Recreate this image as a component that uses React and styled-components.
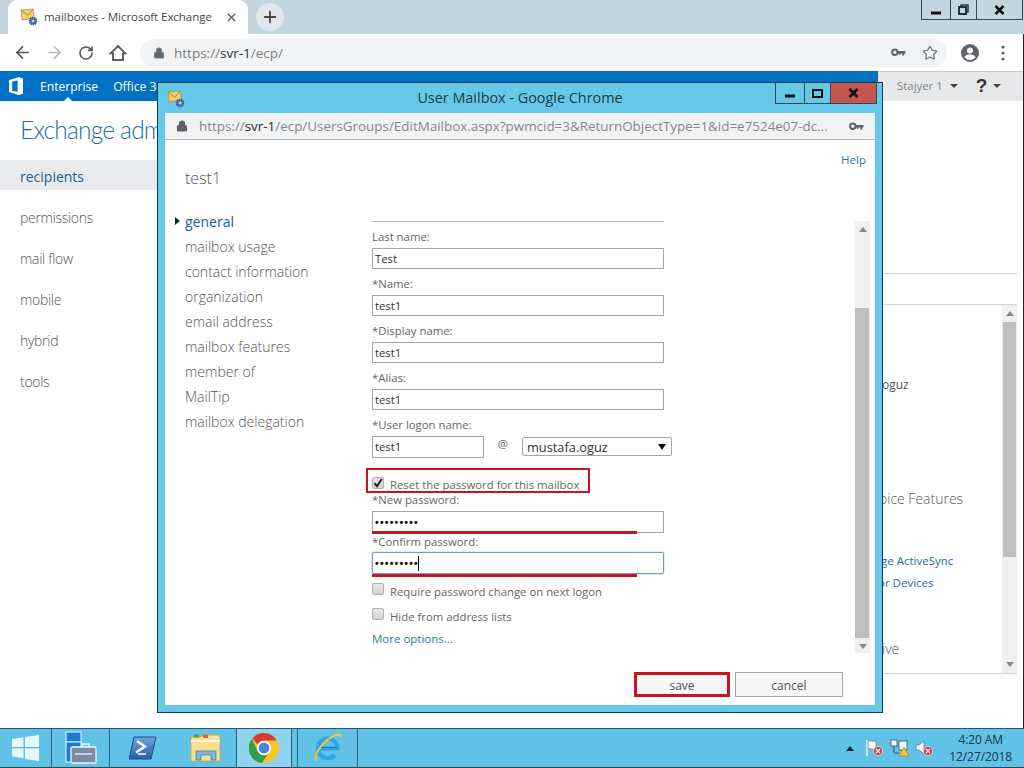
import React from 'react';
import styled, { createGlobalStyle } from 'styled-components';
import { ArrowLeft, ArrowRight, RotateCw, Lock, Star, X, Plus } from 'lucide-react';

const UI = `"Open Sans", "Noto Sans", "Liberation Sans", sans-serif`;
const RED = '#c8141c';

const Global = createGlobalStyle`
  html, body { margin: 0; padding: 0; background: #fff; }
  * { box-sizing: border-box; }
  #root { width: 1024px; height: 768px; }
`;

const Desktop = styled.div`
  position: relative; width: 1024px; height: 768px; overflow: hidden;
  display: flex; flex-direction: column; background: #fff;
  font-family: ${UI}; color: #666;
`;
const TabStrip = styled.div`
  height: 34px; flex: none; background: #c3d5de; display: flex; align-items: flex-end; padding-left: 8px; position: relative;
`;
const Tab = styled.div`
  width: 240px; height: 34px; background: #fff; border-radius: 9px 9px 0 0;
  display: flex; align-items: center; padding: 0 10px 0 12px; font-size: 11.5px; color: #45484b; gap: 6px;
`;
const TabTitle = styled.span` flex: 1; white-space: nowrap; letter-spacing: -.05px; padding-bottom: 1px; `;
const NewTab = styled.div`
  width: 28px; height: 28px; border-radius: 50%; background: #e0e7ec; color: #45484b;
  display: flex; align-items: center; justify-content: center; margin: 0 0 3px 8px;
`;
const WinControls = styled.div`
  position: absolute; display: flex; height: ${p => p.$h}px; top: 0; right: ${p => p.$right}px;
  border: 1px solid #2e4a5c; border-top: none;
`;
const WinBtn = styled.div`
  width: ${p => p.$w}px; display: flex; align-items: center; justify-content: center;
  border-left: ${p => p.$first ? 'none' : '1px solid #2e4a5c'};
  background: ${p => p.$bg || 'transparent'};
`;
const Toolbar = styled.div`
  height: 37px; flex: none; background: #fff; display: flex; align-items: center; padding-left: 6px; color: #5f6368;
  border-right: 1px solid #222;
`;
const ToolIcons = styled.div` display: flex; align-items: center; width: 134px; `;
const ToolCell = styled.span` width: 32px; display: flex; justify-content: center; `;
const Omnibox = styled.div`
  width: 807px; height: 28px; border-radius: 14px; background: #f1f3f4; display: flex; align-items: center;
  padding: 0 8px 0 13px; font-size: 13.5px; color: #7b7e82; gap: 9px;
`;
const Url = styled.span` flex: 1; white-space: nowrap; `;
const Host = styled.span` color: #2b2d30; `;
const OmniKey = styled.span` display: flex; margin-right: 7px; `;
const OmniStar = styled(Star)` margin-right: 1px; `;
const AfterOmni = styled.div` display: flex; align-items: center; gap: 21px; margin-left: 13px; `;
const TopBar = styled.div`
  height: 30px; flex: none; display: flex; background: #e7e8ea; position: relative; border-right: 1px solid #222;
`;
const BlueBar = styled.div`
  width: 878px; background: #0072c6; color: #fff; display: flex; align-items: center; font-size: 12.1px; padding-left: 8px; position: relative;
`;
const BarTick = styled.i`
  position: absolute; left: 64px; bottom: 0; border: 4px solid transparent; border-bottom-color: #fff; border-top: none;
`;
const BarLink = styled.span` margin-left: ${p => p.$ml}px; white-space: nowrap; `;
const UserArea = styled.div`
  flex: 1; display: flex; align-items: center; padding: 0 0 2px 19px; font-size: 11.4px; color: #858585; white-space: nowrap;
  border-top: 1px solid #c9c9c9;
`;
const Caret = styled.i`
  display: inline-block; border: 4px solid transparent; border-top-color: #444; border-bottom: none; margin-left: ${p => p.$ml || 8}px;
`;
const Help = styled.b` font-size: 19px; color: #333; margin-left: 18px; font-family: "Liberation Sans", sans-serif; `;
const Main = styled.div` flex: 1; display: flex; min-height: 0; border-right: 1px solid #222; `;
const Sidebar = styled.div` width: 160px; flex: none; padding-top: 13px; `;
const AppTitle = styled.div`
  font-family: Lato, "Open Sans", sans-serif; letter-spacing: -.8px;
  font-size: 24.5px; font-weight: 300; color: #1e6ca8; padding-left: 20px; white-space: nowrap; height: 46px; line-height: 32px;
`;
const SideItem = styled.div`
  height: 30px; line-height: 33px; margin-bottom: 11px; padding-left: 20px; font-size: 14px; font-weight: ${p => p.$active ? 400 : 300};
  letter-spacing: ${p => p.$active ? 0 : '-.3px'};
  background: ${p => p.$active ? '#e8eaed' : 'transparent'}; color: ${p => p.$active ? '#1b5f94' : '#555'};
`;
const Backdrop = styled.div` flex: 1; padding-left: 722px; `;
const BackRight = styled.div` height: 100%; display: flex; flex-direction: column; `;
const Rule = styled.div`
  height: 1px; background: #d4d4d4; flex: none; margin-top: ${p => p.$mt}px; margin-right: 6px;
`;
const ListArea = styled.div` height: 369px; display: flex; border-bottom: 1px solid #d4d4d4; margin-right: 6px; `;
const ListBody = styled.div` flex: 1; position: relative; `;
const ListText = styled.div`
  position: absolute; left: ${p => p.$left}px; top: ${p => p.$top}px; font-size: ${p => p.$size || (p.$blue ? 11.5 : 12)}px; font-weight: ${p => p.$size ? 300 : 400};
  color: ${p => p.$blue ? '#1f6ea8' : '#555'}; white-space: nowrap;
`;
const Track = styled.div` width: 15px; flex: none; background: #f0f0f0; display: flex; flex-direction: column; align-items: stretch; `;
const TrackThumb = styled.div` height: 235px; flex: none; background: #bfbfbf; margin: 0 1px; `;
const Spacer = styled.div` flex: 1; `;
const ArrowCap = styled.div`
  height: 17px; flex: none; display: flex; align-items: center; justify-content: center;
`;
const ArrowTri = styled.i`
  display: block; border: 4px solid transparent; border-bottom: ${p => p.$up ? '5px solid #888' : 'none'}; border-top: ${p => p.$up ? 'none' : '5px solid #888'};
`;
const Taskbar = styled.div`
  height: 40px; flex: none; background: #5fc2e6; border-top: 1px solid #2f5468; border-bottom: 1px solid #24475a; display: flex; align-items: stretch;
`;
const TaskCell = styled.div`
  width: ${p => p.$w}px; flex: none; display: flex; align-items: center; justify-content: center;
  border-right: ${p => p.$noline ? 'none' : '1px solid #2f5f78'};
  background: ${p => p.$active ? '#8fd4ee' : 'transparent'};
`;
const Tray = styled.div` flex: 1; display: flex; align-items: center; justify-content: flex-end; padding-right: 12px; gap: 5px; `;
const TrayArrow = styled.i`
  display: block; border: 4px solid transparent; border-bottom: 5px solid #11283a; border-top: none; margin-right: 6px;
`;
const Clock = styled.div` font-size: 12px; line-height: 17px; text-align: center; margin-left: 9px; color: #1c3444; letter-spacing: -.1px; `;

/* popup window, placed freely on the desktop */
const Popup = styled.div`
  position: absolute; left: 157px; top: 82px; width: 726px; height: 631px;
  background: #65c8e8; border: 1px solid #1a3a50; padding: 0 7px 7px;
  display: flex; flex-direction: column;
`;
const PopupTitle = styled.div`
  height: 30px; flex: none; display: flex; align-items: center; justify-content: center; font-size: 14.4px; color: #1d3a4b; padding-bottom: 2px;
`;
const PopupFav = styled.span` position: absolute; left: 9px; top: 7px; display: flex; `;
const PopupAddr = styled.div`
  height: 27px; flex: none; background: #f1f2f3; border-bottom: 1px solid #b5b5b5; display: flex; align-items: center;
  padding: 0 11px 0 11px; gap: 11px; font-size: 13.42px; color: #85888b; white-space: nowrap;
`;
const PopupBody = styled.div`
  flex: 1; background: #fff; display: flex; flex-direction: column; min-height: 0;
`;
const HelpLink = styled.div`
  text-align: right; font-size: 11.5px; color: #2a7ba0; padding: 12px 9px 0 0; height: 28px;
`;
const TestTitle = styled.div` font-size: 16px; font-weight: 300; color: #555; padding-left: 20px; height: 41px; line-height: 20px; flex: none; `;
const Columns = styled.div` flex: 1; display: flex; min-height: 0; `;
const PopNav = styled.div` width: 207px; flex: none; padding-left: 20px; `;
const PopNavItem = styled.div`
  height: 25px; line-height: 25px; font-size: 14px; position: relative;
  font-weight: ${p => p.$active ? 400 : 300};
  color: ${p => p.$active ? '#14628f' : '#555'}; white-space: nowrap;
`;
const NavArrow = styled.i`
  position: absolute; left: -10px; top: 8px; border: 4px solid transparent; border-left: 5px solid #222; border-right: none;
`;
const FormCol = styled.div` width: 292px; flex: none; font-size: 11.35px; color: #666; border-top: 1px solid #bdbdbd; padding-top: 7px; margin-top: 12px; height: 432px; `;
const Label = styled.div`
  height: 16px; line-height: 16px; white-space: nowrap; margin-top: ${p => p.$mt || 0}px; margin-bottom: ${p => p.$mb ?? 3}px;
`;
const Field = styled.div`
  height: ${p => p.$h || 21}px; border: 1px solid ${p => p.$focus ? '#6e9dc4' : '#a6a6a6'}; background: #fff; font-size: 11.3px; color: #333;
  border-radius: ${p => p.$focus ? '2px' : 0};
  padding: 0 0 0 2px; line-height: 19px; margin-bottom: ${p => p.$mb ?? 7}px; width: ${p => p.$w || 292}px; flex: none; position: relative;
  box-shadow: ${p => p.$focus ? '0 0 2px #8fb8d8' : 'none'}; white-space: nowrap;
`;
const Dots = styled.span` font-size: 10.5px; letter-spacing: 1.2px; color: #111; font-family: "Liberation Sans", sans-serif; font-weight: 700; `;
const Cursor = styled.i` display: inline-block; width: 1px; height: 15px; background: #000; vertical-align: middle; margin-left: -1px; `;
const RedLine = styled.i` position: absolute; left: -1px; width: 265px; height: 3px; bottom: ${p => p.$b}px; background: ${RED}; `;
const LogonRow = styled.div` display: flex; align-items: flex-start; margin-bottom: 10px; height: 22px; `;
const At = styled.span` width: 38px; flex: none; text-align: center; font-size: 11.5px; `;
const Select = styled.div`
  width: 150px; flex: none; height: 19px; margin-top: 1px; border: 1px solid #a6a6a6; border-radius: 2px; font-size: 12.8px; color: #333;
  display: flex; align-items: center; justify-content: space-between; padding: 0 5px 0 4px;
`;
const SelTri = styled.i` border: 4px solid transparent; border-top: 6px solid #111; border-bottom: none; `;
const CheckRow = styled.div`
  position: relative; display: flex; align-items: center; height: ${p => p.$h}px; margin-top: ${p => p.$mt || 0}px; margin-bottom: ${p => p.$mb || 0}px; white-space: nowrap;
`;
const Box = styled.span`
  width: 12px; height: 12px; border: 1px solid #b0b0b0; border-radius: 2px; background: linear-gradient(#e8e8e8, #d2d2d2);
  margin-right: 6px; flex: none; display: flex; align-items: center; justify-content: center; margin-top: ${p => p.$mt || 0}px;
`;
const CheckText = styled.span` padding-top: ${p => p.$pt || 0}px; `;
const RedBox = styled.i` position: absolute; left: -6px; top: 0; width: 224px; height: 25px; border: 2.5px solid ${RED}; pointer-events: none; `;
const MoreLink = styled.div` color: #2a7ba0; font-size: 11.5px; line-height: 16px; `;
const PopScroll = styled.div`
  margin-left: 191px; width: 15px; height: 432px; margin-top: 12px; background: #f0f0f0; display: flex; flex-direction: column;
`;
const PopThumb = styled.div` height: 330px; margin: 70px 1px 0 0; background: #bfbfbf; flex: none; `;
const PopFooter = styled.div`
  height: 50px; flex: none; display: flex; justify-content: flex-end; gap: 5px; padding: 17px 32px 0 0; align-items: flex-start;
`;
const FootBtn = styled.div`
  width: ${p => p.$w}px; height: 25px; padding-top: 2px; border: ${p => p.$red ? `3px solid ${RED}` : '1px solid #a6a6a6'}; font-size: 12px; color: #555;
  display: flex; align-items: center; justify-content: center; background: #f6f6f6;
`;

const MailIcon = () => (
  <svg width="18" height="18" viewBox="0 0 18 18">
    <path d="M1 2l12-1 1.4 9L2 12z" fill="#f2cf6a" stroke="#a98a3a" strokeWidth=".7" />
    <path d="M1 2l6.8 5.4L13 1" fill="none" stroke="#8f7430" strokeWidth=".8" />
    <circle cx="13" cy="13" r="3.6" fill="#4a74b4" stroke="#2d4f8b" strokeWidth="1.4" strokeDasharray="1.4 .8" />
    <circle cx="13" cy="13" r="1.3" fill="#c9d9ee" />
  </svg>
);
const KeyIcon = ({ c = '#5f6368' }) => (
  <svg width="15" height="9" viewBox="0 0 15 9">
    <circle cx="3.8" cy="4.2" r="2.7" fill="none" stroke={c} strokeWidth="2" />
    <path d="M6.5 3h8v2.4h-1.3v2h-2v-2H9.6v1.4H7.8V5.4H6.5z" fill={c} />
  </svg>
);
const HomeIcon = () => (
  <svg width="18" height="18" viewBox="0 0 18 18">
    <path d="M1.6 9.4L9 2l7.4 7.4h-2.4V16H4V9.4z" fill="none" stroke="#55585c" strokeWidth="1.9" strokeLinejoin="miter" />
  </svg>
);
const AccountIcon = () => (
  <svg width="20" height="20" viewBox="0 0 20 20">
    <circle cx="10" cy="10" r="9" fill="#5f6368" />
    <circle cx="10" cy="7.6" r="3" fill="#fff" />
    <path d="M4.4 14.2c1.3-2.1 3.5-2.9 5.6-2.9s4.3.8 5.6 2.9c-1.3 1.6-3.3 2.7-5.6 2.7s-4.3-1.1-5.6-2.7z" fill="#fff" />
  </svg>
);
const Kebab = () => (
  <svg width="4" height="16" viewBox="0 0 4 16"><g fill="#5f6368"><circle cx="2" cy="2" r="1.6" /><circle cx="2" cy="8" r="1.6" /><circle cx="2" cy="14" r="1.6" /></g></svg>
);
const OfficeLogo = () => (
  <svg width="16" height="20" viewBox="0 0 16 20">
    <path d="M1 4.2L10.5 1 15 2.4v15.4L10.5 19 1 16z" fill="#fff" />
    <path d="M4.2 5.5l5.4-1v11.3l-5.4-1z" fill="#0072c6" />
  </svg>
);
const MinGlyph = () => <svg width="10" height="10" viewBox="0 0 10 10"><rect x="0" y="6.5" width="10" height="3" fill="#111" /></svg>;
const RestoreGlyph = () => (
  <svg width="11" height="11" viewBox="0 0 11 11"><rect x="3" y="1" width="7" height="7" fill="none" stroke="#15242e" strokeWidth="1.3" /><rect x="1" y="3" width="7" height="7" fill="#c3d5de" stroke="#15242e" strokeWidth="1.8" /></svg>
);
const MaxGlyph = () => <svg width="11" height="9" viewBox="0 0 11 9"><rect x="1" y="1" width="9" height="7" fill="none" stroke="#111" strokeWidth="2" /></svg>;
const CloseGlyph = () => (
  <svg width="11" height="10" viewBox="0 0 11 10"><path d="M1.5 1l8 8M9.5 1l-8 8" stroke="#111" strokeWidth="2.5" /></svg>
);
const WinLogo = () => (
  <svg width="27" height="26" viewBox="0 0 27 26"><path d="M0 4l11.5-1.7V12H0zM13 2L27 0v12H13zM0 13.5h11.5v9.7L0 21.6zM13 13.5h14V26l-14-2z" fill="#e9f6fb" /></svg>
);
const ServerMgr = () => (
  <svg width="34" height="34" viewBox="0 0 34 34">
    <rect x="2" y="1" width="15" height="10" fill="#1d7dcc" stroke="#eaf6fc" strokeWidth="1" />
    <rect x="2" y="11" width="15" height="20" fill="#1d7dcc" stroke="#eaf6fc" strokeWidth="1" />
    <path d="M18 16v-3h7v3" fill="none" stroke="#eaf6fc" strokeWidth="1.3" />
    <rect x="7" y="16" width="25" height="16" rx="1.5" fill="#7a8ba3" stroke="#eaf6fc" strokeWidth="1.3" />
    <path d="M11 23h17" stroke="#eaf6fc" strokeWidth="1.3" />
  </svg>
);
const PowerShell = () => (
  <svg width="28" height="24" viewBox="0 0 28 24">
    <defs><linearGradient id="ps" x1="0" y1="0" x2="0" y2="1"><stop offset="0" stopColor="#6fa6dc" /><stop offset="1" stopColor="#245fa8" /></linearGradient></defs>
    <path d="M5 1h22l-5 22H0z" fill="url(#ps)" stroke="#1d4f8c" strokeWidth="1" />
    <path d="M8 5l8 5.5-9 6" fill="none" stroke="#fff" strokeWidth="2.4" />
    <path d="M9 18h8" stroke="#dce9f6" strokeWidth="1.8" />
  </svg>
);
const Folder = () => (
  <svg width="32" height="30" viewBox="0 0 32 30">
    <path d="M1 4h10l2-2h17v26H1z" fill="#f6e08e" stroke="#c9a649" strokeWidth=".8" />
    <rect x="4" y="1.5" width="5" height="3" fill="#4f9a46" />
    <rect x="13" y="2" width="5" height="3" fill="#d9683e" />
    <rect x="22" y="3" width="5" height="3" fill="#e9e4cc" />
    <path d="M1 8h29" stroke="#fff7d2" strokeWidth="2" />
    <path d="M6 27v-9h20v9h-5v-5H11v5z" fill="#7fb6df" stroke="#2d6da5" strokeWidth=".6" />
  </svg>
);
const Chrome = () => (
  <svg width="30" height="30" viewBox="0 0 30 30">
    <circle cx="15" cy="15" r="15" fill="#f7c72a" />
    <path d="M15 0a15 15 0 0 1 13 7.5H15a7.5 7.5 0 0 0-6.6 4L3.4 5.3A15 15 0 0 1 15 0z" fill="#d93a30" />
    <path d="M2.9 6L8.8 18.6A7.5 7.5 0 0 0 18 22l-5 8A15 15 0 0 1 2.9 6z" fill="#2f9e4c" />
    <circle cx="15" cy="15" r="7" fill="#fff" />
    <circle cx="15" cy="15" r="5.4" fill="#4b82e6" />
  </svg>
);
const IE = () => (
  <svg width="32" height="32" viewBox="0 0 32 32">
    <path d="M6 16.5h19.5A9.8 9.8 0 1 0 23 23" fill="none" stroke="#2ba6e6" strokeWidth="4.2" />
    <path d="M7 15.5h18" stroke="#0f78bb" strokeWidth="1" />
    <path d="M4 29C1 24 10 10 20 5c5-3 9-3 9 0" fill="none" stroke="#eec33a" strokeWidth="2" />
  </svg>
);
const TrayFlag = () => (
  <svg width="20" height="18" viewBox="0 0 20 18">
    <path d="M2 1v16" stroke="#fff" strokeWidth="1.2" />
    <path d="M3 2c3-1 4 1 8 0v8c-4 1-5-1-8 0z" fill="#eef6fa" stroke="#59707f" strokeWidth=".6" />
    <circle cx="13" cy="12" r="4.6" fill="#d33f48" stroke="#fff" strokeWidth=".6" />
    <path d="M11 10l4 4M15 10l-4 4" stroke="#fff" strokeWidth="1.2" />
  </svg>
);
const TrayNet = () => (
  <svg width="20" height="18" viewBox="0 0 20 18">
    <rect x="1" y="1" width="6" height="6" fill="#eef6fa" stroke="#3c5566" strokeWidth=".8" />
    <rect x="9" y="2" width="8" height="9" fill="#eef6fa" stroke="#3c5566" strokeWidth=".8" />
    <path d="M4 7v7h5" fill="none" stroke="#3c5566" strokeWidth="1" />
    <path d="M14 8l5 9h-10z" fill="#f3c23a" stroke="#8a6d14" strokeWidth=".5" />
  </svg>
);
const TraySound = () => (
  <svg width="20" height="18" viewBox="0 0 20 18">
    <path d="M1 6h3l5-4v13l-5-4H1z" fill="#eef6fa" stroke="#59707f" strokeWidth=".7" />
    <circle cx="13" cy="12" r="4.6" fill="#d33f48" stroke="#fff" strokeWidth=".6" />
    <path d="M11 10l4 4M15 10l-4 4" stroke="#fff" strokeWidth="1.2" />
  </svg>
);
const Check = () => <svg width="10" height="10" viewBox="0 0 10 10"><path d="M1.5 5.2l2.5 3L8.8 1" fill="none" stroke="#222" strokeWidth="2" /></svg>;

const navItems = ['mailbox usage', 'contact information', 'organization', 'email address', 'mailbox features', 'member of', 'MailTip', 'mailbox delegation'];
const simpleFields = [['Last name:', 'Test'], ['*Name:', 'test1'], ['*Display name:', 'test1'], ['*Alias:', 'test1']];

export default function App() {
  return (
    <Desktop>
      <Global />
      <TabStrip>
        <Tab>
          <MailIcon />
          <TabTitle>mailboxes - Microsoft Exchange</TabTitle>
          <X size={13} strokeWidth={2.4} color="#55585c" />
        </Tab>
        <NewTab><Plus size={18} strokeWidth={2.4} /></NewTab>
        <WinControls $right={1} $h={20}>
          <WinBtn $w={28} $first><MinGlyph /></WinBtn>
          <WinBtn $w={26}><RestoreGlyph /></WinBtn>
          <WinBtn $w={46}><CloseGlyph /></WinBtn>
        </WinControls>
      </TabStrip>
      <Toolbar>
        <ToolIcons>
          <ToolCell><ArrowLeft size={19} strokeWidth={2.2} color="#55585c" /></ToolCell>
          <ToolCell><ArrowRight size={19} strokeWidth={2.2} color="#b9bbbe" /></ToolCell>
          <ToolCell><RotateCw size={16} strokeWidth={2.4} color="#55585c" /></ToolCell>
          <ToolCell><HomeIcon /></ToolCell>
        </ToolIcons>
        <Omnibox>
          <Lock size={12} fill="#5f6368" strokeWidth={2.4} />
          <Url>https://<Host>svr-1</Host>/ecp/</Url>
          <OmniKey><KeyIcon /></OmniKey>
          <OmniStar size={16} strokeWidth={2} />
        </Omnibox>
        <AfterOmni>
          <AccountIcon />
          <Kebab />
        </AfterOmni>
      </Toolbar>
      <TopBar>
        <BlueBar>
          <OfficeLogo />
          <BarLink $ml={16}>Enterprise</BarLink>
          <BarLink $ml={15}>Office 365</BarLink>
          <BarTick />
        </BlueBar>
        <UserArea>Stajyer 1<Caret $ml={7} /><Help>?</Help><Caret $ml={6} /></UserArea>
      </TopBar>
      <Main>
        <Sidebar>
          <AppTitle>Exchange admin center</AppTitle>
          <SideItem $active>recipients</SideItem>
          <SideItem>permissions</SideItem>
          <SideItem>mail flow</SideItem>
          <SideItem>mobile</SideItem>
          <SideItem>hybrid</SideItem>
          <SideItem>tools</SideItem>
        </Sidebar>
        <Backdrop>
          <BackRight>
            <Rule $mt={172} />
            <Rule $mt={30} />
            <ListArea>
              <ListBody>
                <ListText $top={71} $left={0}>oguz</ListText>
                <ListText $top={184} $left={-3} $size={14}>oice Features</ListText>
                <ListText $top={248} $left={-1} $blue>ge ActiveSync</ListText>
                <ListText $top={270} $left={-4} $blue>or Devices</ListText>
                <ListText $top={334} $left={0} $size={14}>ive</ListText>
              </ListBody>
              <Track>
                <ArrowCap><ArrowTri $up /></ArrowCap>
                <TrackThumb />
                <Spacer />
                <ArrowCap><ArrowTri /></ArrowCap>
              </Track>
            </ListArea>
          </BackRight>
        </Backdrop>
      </Main>
      <Taskbar>
        <TaskCell $w={52}><WinLogo /></TaskCell>
        <TaskCell $w={58}><ServerMgr /></TaskCell>
        <TaskCell $w={66} $noline><PowerShell /></TaskCell>
        <TaskCell $w={61}><Folder /></TaskCell>
        <TaskCell $w={55} $active><Chrome /></TaskCell>
        <TaskCell $w={6} />
        <TaskCell $w={60}><IE /></TaskCell>
        <Tray>
          <TrayArrow />
          <TrayFlag />
          <TrayNet />
          <TraySound />
          <Clock>4:20 AM<br />12/27/2018</Clock>
        </Tray>
      </Taskbar>

      <Popup>
        <PopupFav><MailIcon /></PopupFav>
        <PopupTitle>User Mailbox - Google Chrome</PopupTitle>
        <WinControls $right={5} $h={21}>
          <WinBtn $w={28} $first><MinGlyph /></WinBtn>
          <WinBtn $w={26}><MaxGlyph /></WinBtn>
          <WinBtn $w={46} $bg="#c4554f"><CloseGlyph /></WinBtn>
        </WinControls>
        <PopupAddr>
          <Lock size={12} fill="#5f6368" color="#5f6368" strokeWidth={2.4} />
          <Url>https://<Host>svr-1</Host>/ecp/UsersGroups/EditMailbox.aspx?pwmcid=3&amp;ReturnObjectType=1&amp;id=e7524e07-dc...</Url>
          <KeyIcon />
        </PopupAddr>
        <PopupBody>
          <HelpLink>Help</HelpLink>
          <TestTitle>test1</TestTitle>
          <Columns>
            <PopNav>
              <PopNavItem $active><NavArrow />general</PopNavItem>
              {navItems.map(n => <PopNavItem key={n}>{n}</PopNavItem>)}
            </PopNav>
            <FormCol>
              {simpleFields.map(([l, v]) => (
                <React.Fragment key={l}>
                  <Label>{l}</Label>
                  <Field>{v}</Field>
                </React.Fragment>
              ))}
              <Label>*User logon name:</Label>
              <LogonRow>
                <Field $w={112} $h={22} $mb={0}>test1</Field>
                <At>@</At>
                <Select>mustafa.oguz<SelTri /></Select>
              </LogonRow>
              <CheckRow $h={25}>
                <RedBox />
                <Box $mt={5}><Check /></Box>
                <CheckText $pt={7}>Reset the password for this mailbox</CheckText>
              </CheckRow>
              <Label $mt={-1}>*New password:</Label>
              <Field $h={22} $mb={0}><Dots>•••••••••</Dots><RedLine $b={-2} /></Field>
              <Label $mt={1} $mb={2}>*Confirm password:</Label>
              <Field $focus $h={22} $mb={0}><Dots>•••••••••</Dots><Cursor /><RedLine $b={-4} /></Field>
              <CheckRow $h={18} $mt={8} $mb={7}><Box $mt={-4} />Require password change on next logon</CheckRow>
              <CheckRow $h={18} $mb={6}><Box $mt={-4} />Hide from address lists</CheckRow>
              <MoreLink>More options...</MoreLink>
            </FormCol>
            <PopScroll>
              <ArrowCap><ArrowTri $up /></ArrowCap>
              <PopThumb />
              <Spacer />
              <ArrowCap><ArrowTri /></ArrowCap>
            </PopScroll>
          </Columns>
          <PopFooter>
            <FootBtn $w={96} $red>save</FootBtn>
            <FootBtn $w={108}>cancel</FootBtn>
          </PopFooter>
        </PopupBody>
      </Popup>
    </Desktop>
  );
}
